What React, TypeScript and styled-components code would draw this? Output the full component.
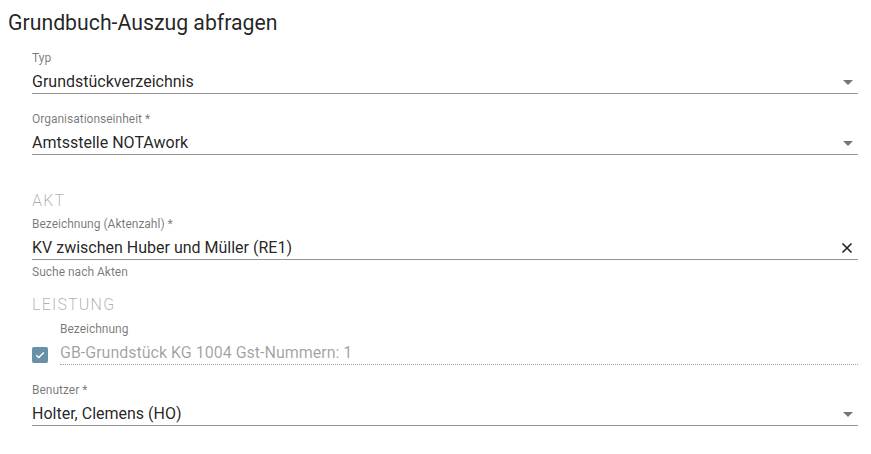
import React from "react";
import styled, { createGlobalStyle } from "styled-components";

const Global = createGlobalStyle`
  html, body { margin: 0; padding: 0; background: #fff; }
  body { font-family: Roboto, "Noto Sans", Arial, sans-serif; color: rgba(0,0,0,0.87); }
`;

const Page = styled.div`
  width: 871px;
  padding: 11px 0 0 8px;
  box-sizing: border-box;
`;

const Title = styled.h1`
  margin: 0;
  font-size: 21.25px;
  line-height: 24px;
  font-weight: 400;
  color: rgba(0,0,0,0.87);
`;

const Form = styled.div`
  display: flex;
  flex-direction: column;
  margin: 16px 13px 0 24px;
`;

const Field = styled.div<{ $mb?: number }>`
  display: flex;
  flex-direction: column;
  margin-bottom: ${(p) => p.$mb ?? 18}px;
`;

const Label = styled.div`
  font-size: 12px;
  line-height: 14px;
  color: rgba(0,0,0,0.54);
`;

const InputRow = styled.div<{ $dotted?: boolean }>`
  display: flex;
  align-items: center;
  margin-top: 6px;
  height: 22px;
  border-bottom: 1px ${(p) => (p.$dotted ? "dotted" : "solid")} ${(p) => (p.$dotted ? "rgba(0,0,0,0.38)" : "rgba(0,0,0,0.42)")};
`;

const Value = styled.div<{ $disabled?: boolean }>`
  flex: 1;
  font-size: 16px;
  line-height: 20px;
  color: ${(p) => (p.$disabled ? "rgba(0,0,0,0.38)" : "rgba(0,0,0,0.87)")};
  white-space: nowrap;
`;

const Arrow = styled.div`
  width: 0;
  height: 0;
  border-left: 5px solid transparent;
  border-right: 5px solid transparent;
  border-top: 5px solid rgba(0,0,0,0.54);
  margin-right: 5px;
`;

const Clear = styled.svg`
  width: 12px;
  height: 12px;
  margin-right: 5px;
`;

const Hint = styled.div`
  font-size: 12px;
  line-height: 14px;
  color: rgba(0,0,0,0.54);
  margin-top: 5px;
`;

const Section = styled.div<{ $mt: number }>`
  margin-top: ${(p) => p.$mt}px;
  font-size: 16px;
  line-height: 20px;
  font-weight: 300;
  letter-spacing: 1.2px;
  color: rgba(0,0,0,0.32);
  text-transform: uppercase;
`;

const CheckRow = styled.div`
  display: flex;
  align-items: flex-end;
  gap: 12px;
  margin-top: 7px;
  margin-bottom: 18px;
`;

const Checkbox = styled.div`
  width: 16px;
  height: 16px;
  border-radius: 2px;
  background: #6890a6;
  display: flex;
  align-items: center;
  justify-content: center;
  margin-bottom: 2px;
`;

const CheckField = styled.div`
  flex: 1;
  display: flex;
  flex-direction: column;
`;

const Dropdown = ({ label, value }: { label: string; value: string }) => (
  <Field>
    <Label>{label}</Label>
    <InputRow>
      <Value>{value}</Value>
      <Arrow />
    </InputRow>
  </Field>
);

export default function App() {
  return (
    <>
      <Global />
      <Page>
        <Title>Grundbuch-Auszug abfragen</Title>
        <Form>
          <Dropdown label="Typ" value="Grundstückverzeichnis" />
          <Dropdown label="Organisationseinheit *" value="Amtsstelle NOTAwork" />
          <Section $mt={18}>Akt</Section>
          <Field $mb={0} style={{ marginTop: 6 }}>
            <Label>Bezeichnung (Aktenzahl) *</Label>
            <InputRow>
              <Value>KV zwischen Huber und Müller (RE1)</Value>
              <Clear viewBox="0 0 12 12">
                <path d="M1.5 1.5 L10.5 10.5 M10.5 1.5 L1.5 10.5" stroke="rgba(0,0,0,0.87)" strokeWidth="1.6" fill="none" />
              </Clear>
            </InputRow>
            <Hint>Suche nach Akten</Hint>
          </Field>
          <Section $mt={16}>Leistung</Section>
          <CheckRow>
            <Checkbox>
              <svg width="12" height="12" viewBox="0 0 12 12">
                <path d="M2.2 6.2 L4.8 8.6 L9.8 3.4" stroke="#fff" strokeWidth="1.4" fill="none" />
              </svg>
            </Checkbox>
            <CheckField>
              <Label>Bezeichnung</Label>
              <InputRow $dotted>
                <Value $disabled>GB-Grundstück KG 1004 Gst-Nummern: 1</Value>
              </InputRow>
            </CheckField>
          </CheckRow>
          <Dropdown label="Benutzer *" value="Holter, Clemens (HO)" />
        </Form>
      </Page>
    </>
  );
}
